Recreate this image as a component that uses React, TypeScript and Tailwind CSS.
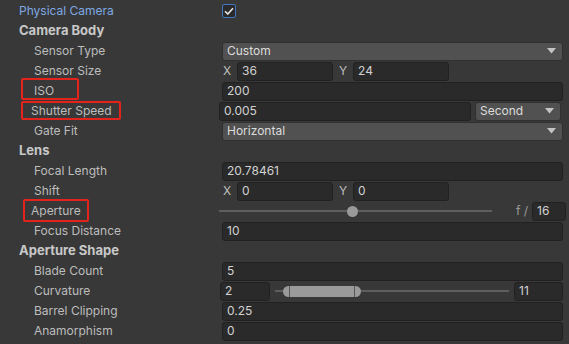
import React from "react";

const font = { fontFamily: "Inter, 'Noto Sans', sans-serif" };

function Label({ text, indent = true, header = false }: { text: string; indent?: boolean; header?: boolean }) {
  return (
    <div
      className={`w-[222px] shrink-0 ${indent ? "pl-[34px]" : "pl-[19px]"} ${
        header ? "font-bold text-[13px] text-[#c8c8c8]" : "text-[#bdbdbd]"
      }`}
    >
      {text}
    </div>
  );
}

function Field({ value, className = "" }: { value: string; className?: string }) {
  return (
    <div
      className={`h-[19px] flex items-center rounded-[3px] border border-[#212121] bg-[#2a2a2a] pl-[4px] text-[#d2d2d2] ${className}`}
    >
      {value}
    </div>
  );
}

function Arrow() {
  return (
    <svg width="9" height="6" viewBox="0 0 9 6" className="shrink-0">
      <path d="M0 0 H9 L4.5 5.5 Z" fill="#c4c4c4" />
    </svg>
  );
}

function Dropdown({ value, className = "" }: { value: string; className?: string }) {
  return (
    <div
      className={`h-[19px] flex items-center justify-between rounded-[3px] border border-[#303030] bg-[#515151] pl-[4px] pr-[6px] text-[#dcdcdc] ${className}`}
    >
      <span>{value}</span>
      <Arrow />
    </div>
  );
}

function Row({ children }: { children: React.ReactNode }) {
  return <div className="relative h-[20px] flex items-center">{children}</div>;
}

function Callout({ className }: { className: string }) {
  return <div className={`absolute rounded-[2px] border-2 border-[#e4241c] ${className}`} />;
}

function XY({ x, y }: { x: string; y: string }) {
  return (
    <>
      <span className="w-[15px] pl-[1px] text-[#bdbdbd]">X</span>
      <Field value={x} className="w-[96px]" />
      <span className="w-[20px] pl-[6px] text-[#bdbdbd]">Y</span>
      <Field value={y} className="w-[96px]" />
    </>
  );
}

export default function App() {
  return (
    <div className="w-[569px] h-[344px] bg-[#383838] pt-[1px] text-[12px] overflow-hidden" style={font}>
      <Row>
        <div className="w-[222px] shrink-0 pl-[19px] text-[#7ea9e3]">Physical Camera</div>
        <div className="w-[14px] h-[14px] rounded-[2px] border border-[#3b7ac2] bg-[#2a2a2a] flex items-center justify-center">
          <svg width="10" height="8" viewBox="0 0 10 8">
            <path d="M1 4.2 L3.8 7 L9 1.2" stroke="#e8e8e8" strokeWidth="1.6" fill="none" />
          </svg>
        </div>
      </Row>
      <Row>
        <Label text="Camera Body" indent={false} header />
      </Row>
      <Row>
        <Label text="Sensor Type" />
        <Dropdown value="Custom" className="w-[341px]" />
      </Row>
      <Row>
        <Label text="Sensor Size" />
        <XY x="36" y="24" />
      </Row>
      <Row>
        <Label text="ISO" />
        <Field value="200" className="w-[341px]" />
        <Callout className="left-[21px] top-[-3px] w-[58px] h-[22px]" />
      </Row>
      <Row>
        <div className="w-[219px] shrink-0 pl-[31px] text-[#bdbdbd]">Shutter Speed</div>
        <Field value="0.005" className="w-[252px]" />
        <Dropdown value="Second" className="ml-[4px] w-[86px]" />
        <Callout className="left-[21px] top-[0px] w-[100px] h-[19px]" />
      </Row>
      <Row>
        <Label text="Gate Fit" />
        <Dropdown value="Horizontal" className="w-[341px]" />
      </Row>
      <Row>
        <Label text="Lens" indent={false} header />
      </Row>
      <Row>
        <Label text="Focal Length" />
        <Field value="20.78461" className="w-[341px]" />
      </Row>
      <Row>
        <Label text="Shift" />
        <XY x="0" y="0" />
      </Row>
      <Row>
        <div className="w-[219px] shrink-0 pl-[31px] text-[#bdbdbd]">Aperture</div>
        <div className="relative w-[273px] h-[12px] flex items-center">
          <div className="w-full h-[2px] bg-[#5e5e5e]" />
          <div className="absolute left-[128px] w-[11px] h-[11px] rounded-full bg-[#9a9a9a]" />
        </div>
        <span className="ml-[24px] w-[16px] text-[#9a9a9a]">f /</span>
        <Field value="16" className="w-[34px]" />
        <Callout className="left-[23px] top-[-2px] w-[66px] h-[23px]" />
      </Row>
      <Row>
        <Label text="Focus Distance" />
        <Field value="10" className="w-[341px]" />
      </Row>
      <Row>
        <Label text="Aperture Shape" indent={false} header />
      </Row>
      <Row>
        <Label text="Blade Count" />
        <Field value="5" className="w-[341px]" />
      </Row>
      <Row>
        <div className="w-[220px] shrink-0 pl-[34px] text-[#bdbdbd]">Curvature</div>
        <Field value="2" className="w-[50px]" />
        <div className="relative ml-[5px] w-[234px] h-[12px] flex items-center">
          <div className="w-full h-[2px] bg-[#5e5e5e]" />
          <div className="absolute left-[8px] w-[78px] h-[11px] rounded-full bg-[#9a9a9a] flex justify-between px-[6px]">
            <div className="w-[1px] h-full bg-[#555555]" />
            <div className="w-[1px] h-full bg-[#555555]" />
          </div>
        </div>
        <Field value="11" className="ml-[5px] w-[49px]" />
      </Row>
      <Row>
        <Label text="Barrel Clipping" />
        <Field value="0.25" className="w-[341px]" />
      </Row>
      <Row>
        <Label text="Anamorphism" />
        <Field value="0" className="w-[341px]" />
      </Row>
    </div>
  );
}
